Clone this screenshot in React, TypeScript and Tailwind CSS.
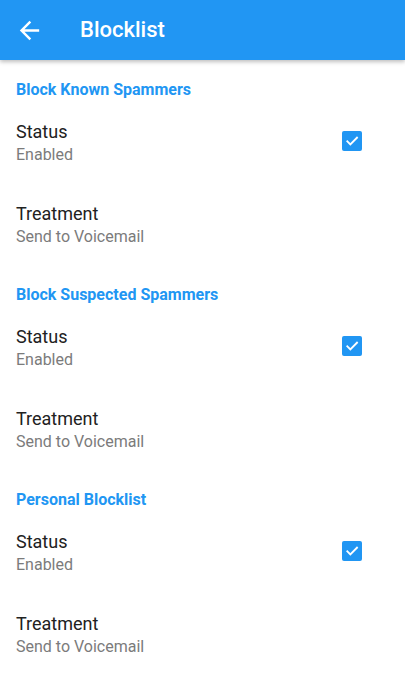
import React from "react";

function Check() {
  return (
    <div className="w-5 h-5 rounded-[2px] bg-[#2196F3] flex items-center justify-center">
      <svg width="16" height="16" viewBox="0 0 24 24" fill="none">
        <path d="M5 12.5l4.5 4.5L19.5 7" stroke="white" strokeWidth="2.8" strokeLinecap="square" />
      </svg>
    </div>
  );
}

function Section({ title, mt }: { title: string; mt: string }) {
  return (
    <div className={`flex flex-col ${mt}`}>
      <div className="px-4 h-5 leading-5 text-[16px] font-bold text-[#2196F3]">{title}</div>
      <div className="flex items-center justify-between px-4 mt-[20px]">
        <div className="flex flex-col">
          <div className="text-[18px] leading-6 text-[#212121]">Status</div>
          <div className="text-[16px] leading-5 mt-[1px] text-[#7b7b7b]">Enabled</div>
        </div>
        <div className="mr-[27px] mb-[4px]">
          <Check />
        </div>
      </div>
      <div className="flex flex-col px-4 mt-[37px]">
        <div className="text-[18px] leading-6 text-[#212121]">Treatment</div>
        <div className="text-[16px] leading-5 mt-[1px] text-[#7b7b7b]">Send to Voicemail</div>
      </div>
    </div>
  );
}

export default function App() {
  return (
    <div className="w-[405px] h-[675px] bg-white overflow-hidden" style={{ fontFamily: "Roboto, 'Noto Sans', sans-serif" }}>
      <div className="h-[60px] bg-[#2196F3] flex items-center shadow-[0_2px_4px_rgba(0,0,0,0.25)] relative z-10">
        <div className="ml-[15px] w-[29px] h-[29px]">
          <svg width="29" height="29" viewBox="0 0 24 24" fill="white">
            <path d="M20 11H7.83l5.59-5.59L12 4l-8 8 8 8 1.41-1.41L7.83 13H20v-2z" />
          </svg>
        </div>
        <div className="ml-[36px] text-white text-[22px] font-medium leading-7">Blocklist</div>
      </div>
      <Section title="Block Known Spammers" mt="mt-5" />
      <Section title="Block Suspected Spammers" mt="mt-[38px]" />
      <Section title="Personal Blocklist" mt="mt-[38px]" />
    </div>
  );
}
